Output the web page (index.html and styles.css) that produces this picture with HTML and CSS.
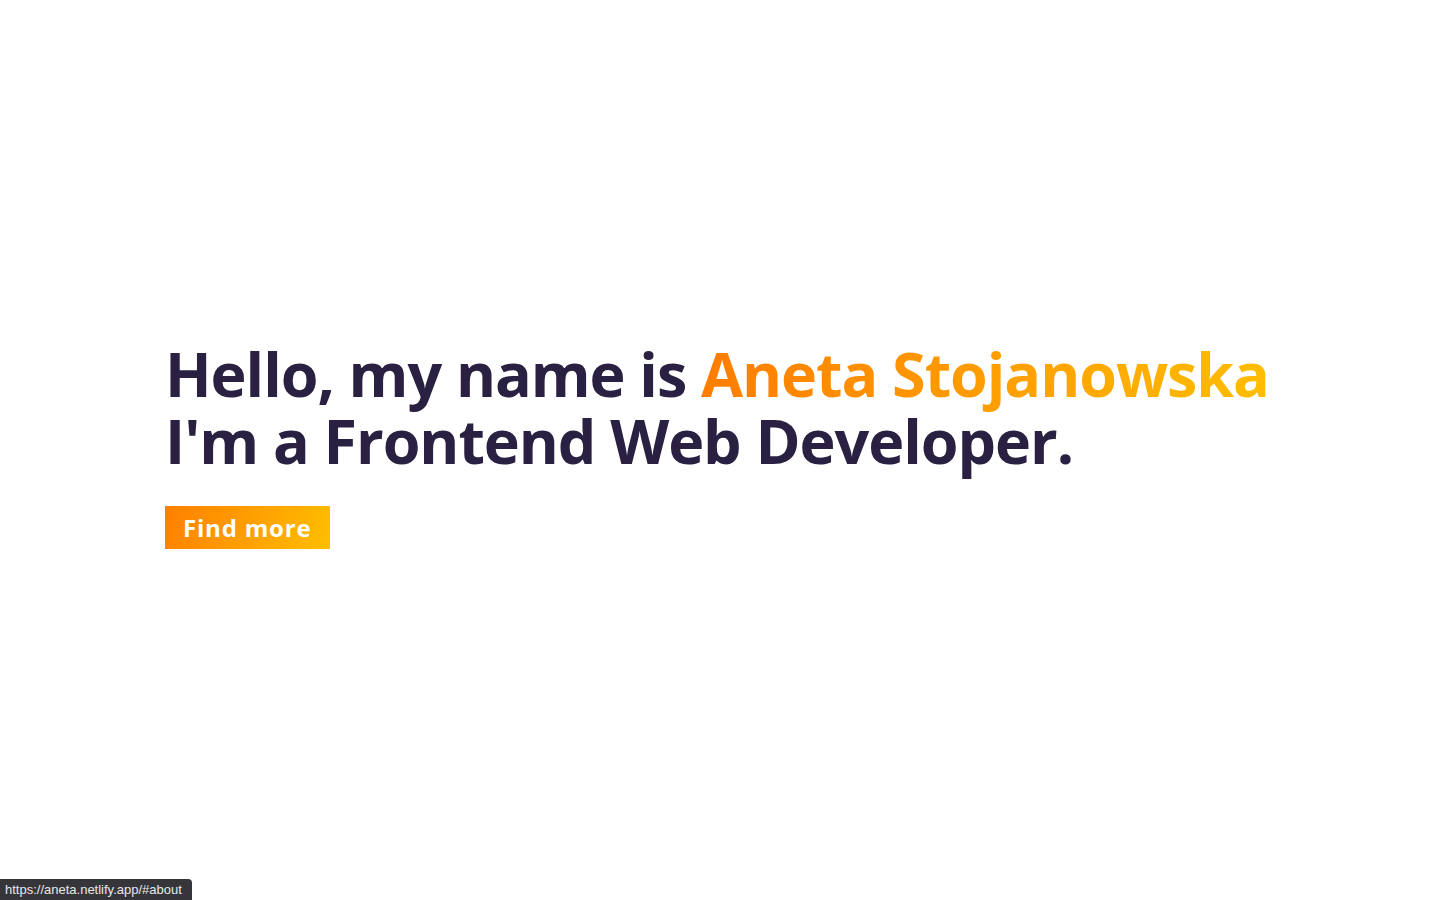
FILE: index.html
```html
<!DOCTYPE html>
<html lang="en">
<head>
<meta charset="utf-8">
<title>Aneta Stojanowska</title>
<link rel="stylesheet" href="styles.css">
</head>
<body>
<section class="hero">
  <div class="container">
    <h1 class="title"><span class="line">Hello, my name is <span class="name">Aneta Stojanowska</span></span><span class="line">I'm a Frontend Web Developer.</span></h1>
    <a class="cta" href="#about">Find more</a>
  </div>
</section>
<div class="status">https://aneta.netlify.app/#about</div>
</body>
</html>
```

FILE: styles.css
```css
html, body {
  margin: 0;
  padding: 0;
  background: #fff;
}
body {
  font-family: "Open Sans", "Liberation Sans", sans-serif;
  color: #2a2142;
}
.hero {
  height: 900px;
  box-sizing: border-box;
  padding-bottom: 11px;
  display: flex;
  align-items: center;
}
.container {
  width: 1110px;
  margin: 0 auto;
}
.title {
  margin: 0 0 32px;
  font-size: 61px;
  line-height: 67px;
  font-weight: 700;
  letter-spacing: -1.05px;
  color: #2a2142;
}
.line {
  display: block;
  white-space: nowrap;
}
.name {
  background: linear-gradient(90deg, #ff7d00 0%, #ffbd00 100%);
  -webkit-background-clip: text;
  background-clip: text;
  color: transparent;
}
.cta {
  display: inline-block;
  padding: 0 19px 0 18px;
  height: 43px;
  line-height: 43px;
  font-size: 24px;
  font-weight: 700;
  letter-spacing: 0.8px;
  color: #fff;
  text-decoration: none;
  background: linear-gradient(110deg, #ff7f00 0%, #ffbf00 100%);
}
.status {
  position: fixed;
  left: 0;
  bottom: 0;
  background: #36363a;
  color: #e8e8ea;
  font-family: "Liberation Sans", sans-serif;
  font-size: 13px;
  line-height: 21px;
  padding: 0 10px 0 5px;
  border-top-right-radius: 4px;
}
```
